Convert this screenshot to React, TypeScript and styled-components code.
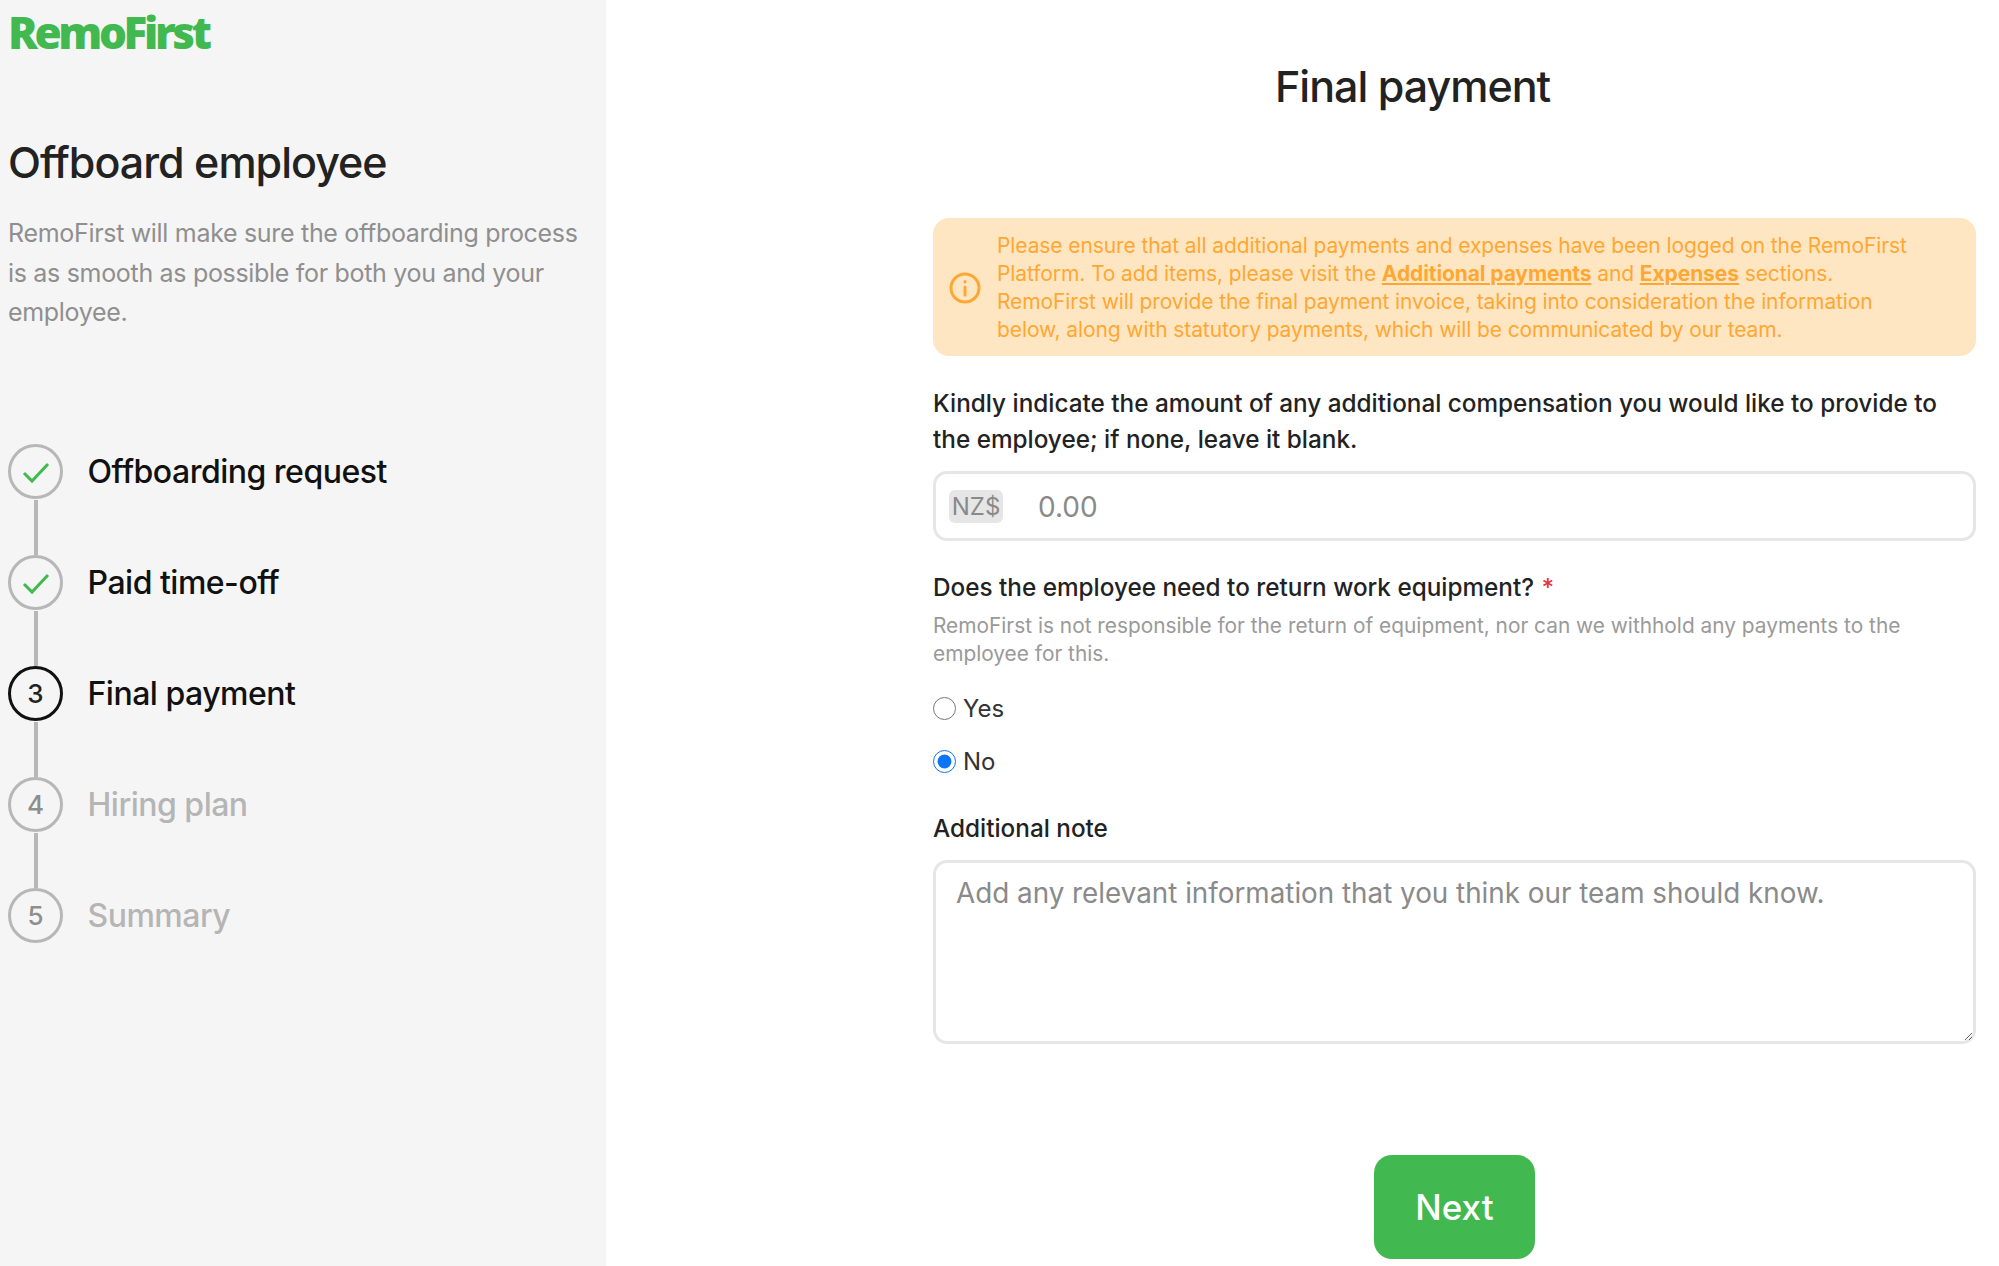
import React from "react";
import styled, { createGlobalStyle } from "styled-components";

const Global = createGlobalStyle`
  html, body { margin: 0; padding: 0; background: #fff; }
  body { font-family: Inter, "Noto Sans", sans-serif; color: #222; }
  * { box-sizing: border-box; }
`;

const Page = styled.div`
  display: grid;
  grid-template-columns: 606px 1fr;
  height: 1266px;
  overflow: hidden;
`;

const Sidebar = styled.aside`
  background: #f5f5f5;
  padding: 5px 0 0 8px;
`;

const Logo = styled.div`
  font-family: "Open Sans", sans-serif;
  font-weight: 800;
  font-size: 44px;
  line-height: 54px;
  letter-spacing: -3.35px;
  color: #41b950;
`;

const Heading = styled.h1`
  margin: 73px 0 0;
  font-size: 43px;
  line-height: 60px;
  font-weight: 500;
  letter-spacing: -1px;
  color: #222;
`;

const Intro = styled.p`
  margin: 22px 0 0;
  width: 590px;
  font-size: 25px;
  line-height: 39.5px;
  font-weight: 400;
  letter-spacing: -0.31px;
  color: #8f8f8f;
`;

const Steps = styled.ol`
  list-style: none;
  margin: 111px 0 0;
  padding: 0;
`;

const StepRow = styled.li`
  display: flex;
  align-items: center;
  gap: 24.5px;
  height: 56px;
`;

const Circle = styled.span<{ $active?: boolean }>`
  flex: none;
  width: 55px;
  height: 55px;
  border-radius: 50%;
  border: 3.5px solid ${(p) => (p.$active ? "#111" : "#b7b7b7")};
  display: flex;
  align-items: center;
  justify-content: center;
  font-size: 26px;
  font-weight: 500;
  color: ${(p) => (p.$active ? "#222" : "#8e8e8e")};
`;

const StepLabel = styled.span<{ $muted?: boolean }>`
  font-size: 32px;
  font-weight: 500;
  letter-spacing: -0.5px;
  color: ${(p) => (p.$muted ? "#b5b5b5" : "#111")};
`;

const Connector = styled.div`
  width: 3.5px;
  height: 55px;
  margin-left: 26px;
  background: #b7b7b7;
`;

const Main = styled.main`
  padding: 56px 23px 0 327px;
`;

const Title = styled.h2`
  margin: 0 0 0 342px;
  font-size: 43px;
  line-height: 60px;
  font-weight: 500;
  letter-spacing: -1px;
  color: #222;
`;

const Alert = styled.div`
  margin-top: 102px;
  height: 138px;
  padding: 14px 40px 12px 16px;
  display: flex;
  align-items: center;
  gap: 16px;
  background: #ffe6c2;
  border-radius: 16px;
  color: #ffa733;
  font-size: 21px;
  line-height: 28px;
  letter-spacing: -0.1px;
`;

const AlertLink = styled.a`
  color: inherit;
  font-weight: 700;
  text-decoration: underline;
`;

const FieldLabel = styled.div<{ $top: number }>`
  margin-top: ${(p) => p.$top}px;
  font-size: 24.3px;
  line-height: 36px;
  font-weight: 500;
  color: #222;
`;

const Required = styled.span`
  color: #e5343d;
  margin-left: 1px;
`;

const AmountBox = styled.label`
  margin-top: 14px;
  height: 70px;
  display: flex;
  align-items: center;
  gap: 35px;
  padding: 0 16px;
  border: 3px solid #e6e6e6;
  border-radius: 14px;
`;

const Currency = styled.span`
  flex: none;
  width: 54px;
  height: 33px;
  margin-left: -3px;
  display: flex;
  align-items: center;
  justify-content: center;
  background: #e6e6e6;
  border-radius: 6px;
  color: #8a8a8a;
  font-size: 24px;
`;

const AmountInput = styled.input`
  flex: 1;
  border: 0;
  outline: 0;
  padding: 1px 0 0;
  font-family: inherit;
  font-size: 28px;
  background: transparent;
  &::placeholder { color: #8a8a8a; opacity: 1; }
`;

const Hint = styled.p`
  margin: 7px 0 14px;
  font-size: 20.85px;
  line-height: 28px;
  color: #9a9a9a;
`;

const RadioRow = styled.label`
  height: 53px;
  display: flex;
  align-items: center;
  gap: 7px;
  font-size: 24px;
  color: #333;
`;

const Radio = styled.input`
  margin: 0;
  width: 23px;
  height: 23px;
  accent-color: #0b75f5;
`;

const Note = styled.textarea`
  display: block;
  margin-top: 14px;
  width: 100%;
  height: 184px;
  padding: 12px 20px;
  border: 3px solid #e6e6e6;
  border-radius: 14px;
  outline: 0;
  font-family: inherit;
  font-size: 27.8px;
  line-height: 36px;
  &::placeholder { color: #8a8a8a; opacity: 1; }
`;

const Actions = styled.div`
  margin-top: 111px;
  display: flex;
  justify-content: center;
`;

const NextButton = styled.button`
  width: 161px;
  height: 104px;
  border: 0;
  border-radius: 18px;
  background: #41b950;
  color: #fff;
  font-family: inherit;
  font-size: 35px;
  font-weight: 500;
`;

const Check = () => (
  <svg width="28" height="28" viewBox="0 0 28 28" fill="none" stroke="#41b950" strokeWidth="3">
    <polyline points="2,15 10,23 26,6" />
  </svg>
);

const InfoIcon = () => (
  <svg width="32" height="32" viewBox="0 0 32 32" fill="none" stroke="#ffa733" strokeWidth="3" style={{ flex: "none" }}>
    <circle cx="16" cy="16" r="14" />
    <line x1="16" y1="15" x2="16" y2="23" strokeLinecap="round" />
    <line x1="16" y1="9.5" x2="16" y2="10" strokeLinecap="round" />
  </svg>
);

const steps = [
  { label: "Offboarding request", state: "done" },
  { label: "Paid time-off", state: "done" },
  { label: "Final payment", state: "active" },
  { label: "Hiring plan", state: "todo" },
  { label: "Summary", state: "todo" },
];

export default function App() {
  return (
    <Page>
      <Global />
      <Sidebar>
        <Logo>RemoFirst</Logo>
        <Heading>Offboard employee</Heading>
        <Intro>RemoFirst will make sure the offboarding process is as smooth as possible for both you and your employee.</Intro>
        <Steps>
          {steps.map((s, i) => (
            <React.Fragment key={s.label}>
              <StepRow>
                <Circle $active={s.state === "active"}>{s.state === "done" ? <Check /> : i + 1}</Circle>
                <StepLabel $muted={s.state === "todo"}>{s.label}</StepLabel>
              </StepRow>
              {i < steps.length - 1 && <Connector />}
            </React.Fragment>
          ))}
        </Steps>
      </Sidebar>
      <Main>
        <Title>Final payment</Title>
        <Alert>
          <InfoIcon />
          <div>
            Please ensure that all additional payments and expenses have been logged on the RemoFirst Platform. To add items, please visit the <AlertLink>Additional payments</AlertLink> and <AlertLink>Expenses</AlertLink> sections.<br />RemoFirst will provide the final payment invoice, taking into consideration the information below, along with statutory payments, which will be communicated by our team.
          </div>
        </Alert>
        <FieldLabel $top={29}>Kindly indicate the amount of any additional compensation you would like to provide to the employee; if none, leave it blank.</FieldLabel>
        <AmountBox>
          <Currency>NZ$</Currency>
          <AmountInput placeholder="0.00" />
        </AmountBox>
        <FieldLabel $top={28}>Does the employee need to return work equipment? <Required>*</Required></FieldLabel>
        <Hint>RemoFirst is not responsible for the return of equipment, nor can we withhold any payments to the employee for this.</Hint>
        <RadioRow><Radio type="radio" name="equipment" />Yes</RadioRow>
        <RadioRow><Radio type="radio" name="equipment" defaultChecked />No</RadioRow>
        <FieldLabel $top={22}>Additional note</FieldLabel>
        <Note placeholder="Add any relevant information that you think our team should know." />
        <Actions><NextButton>Next</NextButton></Actions>
      </Main>
    </Page>
  );
}
